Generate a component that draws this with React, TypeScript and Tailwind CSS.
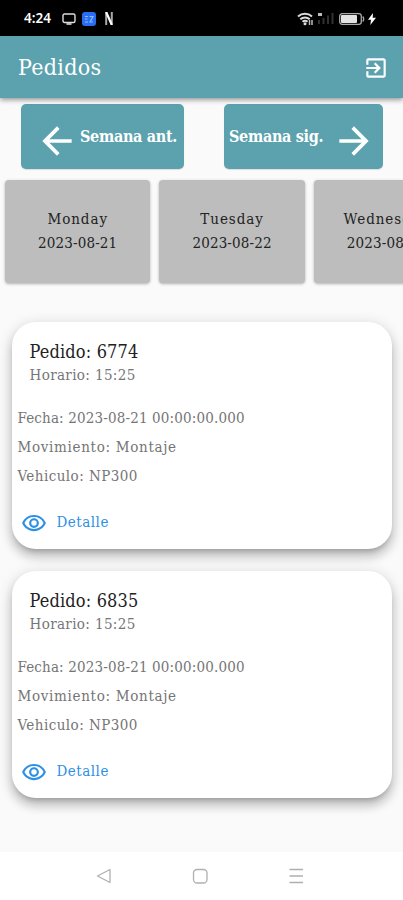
import {
  MdArrowBack,
  MdArrowForward,
  MdExitToApp,
  MdOutlineRemoveRedEye,
} from "react-icons/md";

type Order = {
  id: number;
  time: string;
  date: string;
  movement: string;
  vehicle: string;
};

const days = [
  { name: "Monday", date: "2023-08-21" },
  { name: "Tuesday", date: "2023-08-22" },
  { name: "Wednesday", date: "2023-08-23" },
];

const orders: Order[] = [
  {
    id: 6774,
    time: "15:25",
    date: "2023-08-21 00:00:00.000",
    movement: "Montaje",
    vehicle: "NP300",
  },
  {
    id: 6835,
    time: "15:25",
    date: "2023-08-21 00:00:00.000",
    movement: "Montaje",
    vehicle: "NP300",
  },
];

const StatusBar = () => (
  <div className="flex h-9 shrink-0 items-center bg-black pt-px pr-[27px] pl-[24px] text-white">
    <span className="w-[38px] font-['Noto_Sans',sans-serif] text-[13.5px] font-semibold">
      4:24
    </span>
    <svg width="14" height="12" viewBox="0 0 14 12" fill="none">
      <rect x="1" y="1" width="12" height="8.5" rx="1.5" stroke="#ddd" strokeWidth="1.4" />
      <path d="M4.5 11h5" stroke="#ddd" strokeWidth="1.6" />
    </svg>
    <svg className="ml-[6px]" width="14" height="14" viewBox="0 0 14 14" fill="none">
      <rect width="14" height="14" rx="3" fill="#2a6df5" />
      <path d="M3 4.5h3M3 7h2.5M3 10h3M7.5 4.5h3.5L8 10h3" stroke="#8fb8ff" strokeWidth="1.2" />
    </svg>
    <svg className="ml-[9px]" width="8" height="13" viewBox="0 0 8 13" fill="none">
      <path d="M1.2 0v13M6.8 0v13" stroke="#aaa" strokeWidth="2" />
      <path d="M1.2 0l5.6 13" stroke="#fff" strokeWidth="2.2" />
    </svg>
    <svg className="ml-auto" width="17" height="14" viewBox="0 0 17 14" fill="none">
      <path d="M1 4.5a10.5 10.5 0 0 1 14 0M3.3 7.2a7 7 0 0 1 9.4 0M5.5 9.7a4 4 0 0 1 5 0" stroke="#ddd" strokeWidth="2" />
      <circle cx="8" cy="11.8" r="1.5" fill="#ddd" />
      <path d="M12.5 8v5M15 8v5" stroke="#bbb" strokeWidth="1.5" />
    </svg>
    <svg className="ml-[3px]" width="17" height="13" viewBox="0 0 17 13" fill="none">
      <path d="M1 1h4v3H1z" fill="#bbb" />
      <path d="M2 12V8M6.5 12V6M11 12V3.500M15.500 12V1" stroke="#303030" strokeWidth="2" />
    </svg>
    <svg className="ml-[5px]" width="26" height="12" viewBox="0 0 26 12" fill="none">
      <rect x="0.7" y="0.7" width="21.6" height="10.6" rx="2.5" stroke="#aaa" strokeWidth="1.3" />
      <rect x="2" y="2" width="16" height="8" rx="1" fill="#e2e2e2" />
      <path d="M23.7 3.5q2 2.5 0 5" stroke="#aaa" strokeWidth="1.3" />
    </svg>
    <svg className="ml-[3px]" width="8" height="12" viewBox="0 0 8 12" fill="#fff">
      <path d="M5 0L0 6.8h3L2.3 12 8 4.8H4.7z" />
    </svg>
  </div>
);

const OrderCard = ({ order }: { order: Order }) => (
  <article className="h-[227px] shrink-0 rounded-[24px] bg-white pt-[18px] pl-[6px] text-[15px] text-[#757575] shadow-[0_5px_5px_-3px_rgba(0,0,0,0.2),0_8px_10px_1px_rgba(0,0,0,0.14),0_3px_14px_2px_rgba(0,0,0,0.12)]">
    <h2 className="pl-[12px] text-[18px] leading-6 tracking-[0.15px] text-[#222]">
      Pedido: {order.id}
    </h2>
    <p className="pl-[12px] leading-[23px] tracking-[0.37px]">Horario: {order.time}</p>
    <div className="mt-[17px] leading-[29px]">
      <p className="tracking-[0.16px]">Fecha: {order.date}</p>
      <p className="tracking-[0.68px]">Movimiento: {order.movement}</p>
      <p className="tracking-[0.45px]">Vehiculo: {order.vehicle}</p>
    </div>
    <button className="mt-[18px] flex items-center gap-[10px] pl-[3px] leading-[27px] tracking-[0.5px] text-[#2e90e5]">
      <MdOutlineRemoveRedEye size={26} />
      Detalle
    </button>
  </article>
);

export default function App() {
  return (
    <div className="flex h-[900px] w-full flex-col overflow-hidden bg-[#fafafa] font-['DejaVu_Serif_Condensed','DejaVu_Serif',serif] font-stretch-condensed">
      <StatusBar />
      <header className="z-10 flex h-[62px] shrink-0 items-center justify-between bg-[#5ba2ae] pt-px pr-[14px] pl-[18px] text-white shadow-[0_2px_5px_rgba(0,0,0,0.4)]">
        <h1 className="text-[23px] tracking-[0.3px]">Pedidos</h1>
        <MdExitToApp size={26} />
      </header>
      <div className="mt-[6px] flex h-[65px] shrink-0 justify-between pr-5 pl-[21px] text-[16px] font-bold tracking-[-0.3px] text-white">
        <button className="flex w-[163px] items-center rounded-[5px] bg-[#5ba2ae] pl-[14px] shadow-[0_1px_1px_rgba(0,0,0,0.12)]">
          <MdArrowBack size={44} className="mt-2 shrink-0" />
          <span className="pl-px whitespace-nowrap">Semana ant.</span>
        </button>
        <button className="flex w-[159px] items-center rounded-[5px] bg-[#5ba2ae] pl-[5px] shadow-[0_1px_1px_rgba(0,0,0,0.12)]">
          <span className="w-[103px] text-left whitespace-nowrap">Semana sig.</span>
          <MdArrowForward size={44} className="mt-2 shrink-0" />
        </button>
      </div>
      <div className="mt-[10.500px] flex h-[103.500px] shrink-0 gap-[9px] pl-[5px]">
        {days.map((day) => (
          <div
            key={day.date}
            className="flex w-[145.400px] shrink-0 flex-col items-center justify-center rounded-[4px] bg-[#bdbdbd] text-[15px] leading-6 text-[#222] shadow-[0_1px_3px_rgba(0,0,0,0.3)]"
          >
            <span className="tracking-[0.95px]">{day.name}</span>
            <span className="tracking-[0.15px]">{day.date}</span>
          </div>
        ))}
      </div>
      <main className="mt-[39px] flex flex-1 flex-col gap-[22px] pr-[11px] pl-[11.500px]">
        {orders.map((order) => (
          <OrderCard key={order.id} order={order} />
        ))}
      </main>
      <nav className="flex h-12 shrink-0 items-center bg-white pl-[96px]">
        <svg width="208" height="16" viewBox="0 0 208 16" fill="none" stroke="#b0b0b0" strokeWidth="1.3">
          <path d="M1.5 8L14 1.5v13z" strokeLinejoin="round" />
          <rect x="97.5" y="1.5" width="13.5" height="13.5" rx="3.5" />
          <path d="M193.5 1.5h13.500M193.5 8h13.500M193.5 14.5h13.500" />
        </svg>
      </nav>
    </div>
  );
}
